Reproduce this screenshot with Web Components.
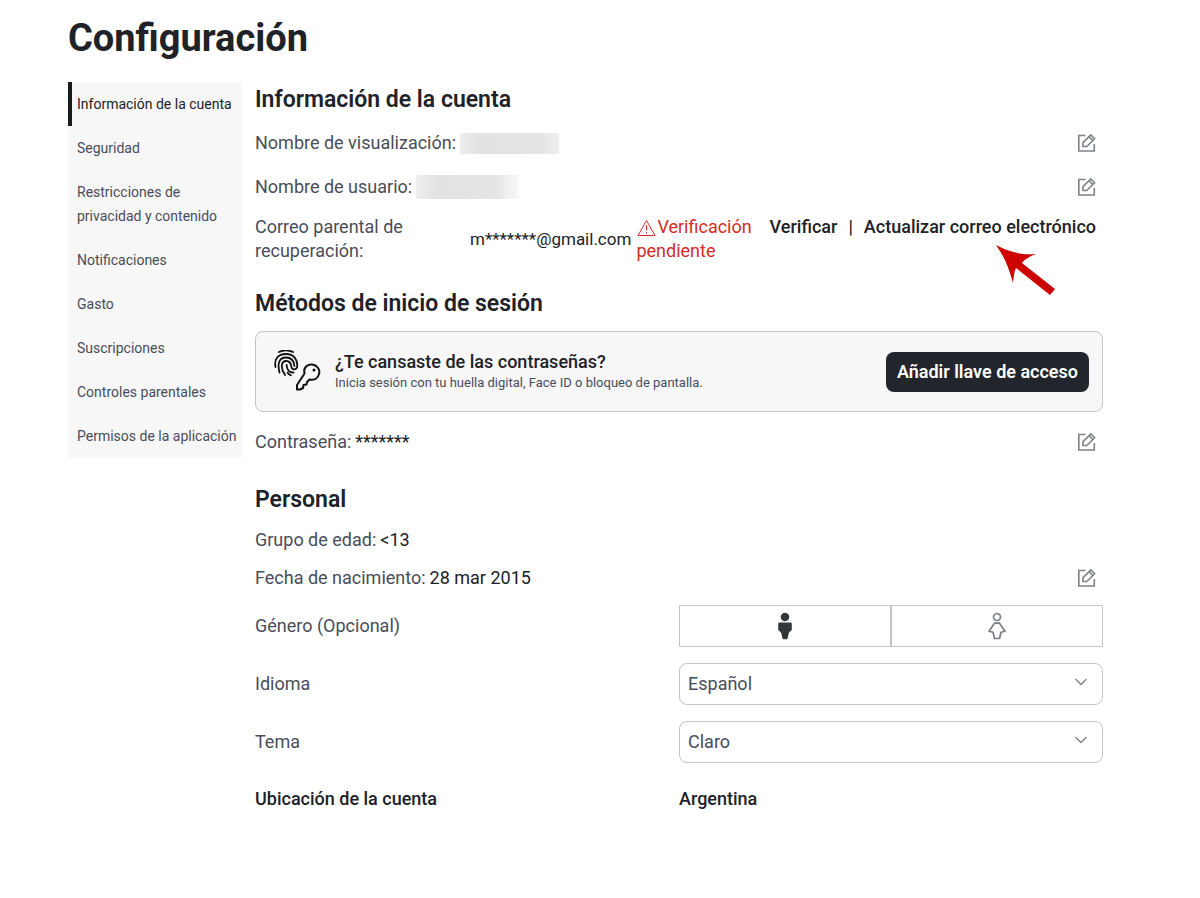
<!DOCTYPE html>
<html lang="es">
<head>
<meta charset="utf-8">
<meta name="viewport" content="width=device-width, initial-scale=1">
<title>Configuración</title>
<style>
  body {
    margin: 0;
    background: #fff;
    color: #202227;
    font: 400 18px/24px Roboto, "Noto Sans", sans-serif;
    --muted: #494d5a;
    --line: #c3c4c7;
    --panel: #f7f7f8;
  }
</style>
</head>
<body>
<settings-page heading="Configuración">
  <settings-nav slot="nav">
    <nav-item active>Información de la cuenta</nav-item>
    <nav-item>Seguridad</nav-item>
    <nav-item>Restricciones de privacidad y contenido</nav-item>
    <nav-item>Notificaciones</nav-item>
    <nav-item>Gasto</nav-item>
    <nav-item>Suscripciones</nav-item>
    <nav-item>Controles parentales</nav-item>
    <nav-item>Permisos de la aplicación</nav-item>
  </settings-nav>

  <settings-section heading="Información de la cuenta">
    <info-row label="Nombre de visualización:" editable><hidden-value></hidden-value></info-row>
    <info-row label="Nombre de usuario:" editable><hidden-value size="large"></hidden-value></info-row>
    <email-row label="Correo parental de recuperación:" email="m*******@gmail.com" status="Verificación pendiente"></email-row>
  </settings-section>

  <settings-section heading="Métodos de inicio de sesión">
    <passkey-card heading="¿Te cansaste de las contraseñas?" action="Añadir llave de acceso">Inicia sesión con tu huella digital, Face ID o bloqueo de pantalla.</passkey-card>
    <info-row label="Contraseña:" editable>*******</info-row>
  </settings-section>

  <settings-section heading="Personal">
    <info-row label="Grupo de edad:" compact>&lt;13</info-row>
    <info-row label="Fecha de nacimiento:" compact editable>28 mar 2015</info-row>
    <gender-field label="Género (Opcional)"></gender-field>
    <select-field label="Idioma" options="Español,English,Português"></select-field>
    <select-field label="Tema" options="Claro,Oscuro"></select-field>
    <text-field label="Ubicación de la cuenta">Argentina</text-field>
  </settings-section>
</settings-page>

<script>
class SettingsPage extends HTMLElement {
  constructor() {
    super();
    this.attachShadow({ mode: 'open' });
  }

  connectedCallback() {
    this.shadowRoot.innerHTML = `
      <style>
        :host {
          display: block;
          padding: 16px 97px 40px 68px;
        }

        h1 {
          margin: 0 0 22px;
          font-size: 38px;
          line-height: 44px;
          font-weight: 700;
        }

        .columns {
          display: flex;
          align-items: flex-start;
          gap: 13px;
        }

        main {
          flex: 1;
          min-width: 0;
        }
      </style>
      <h1>${this.getAttribute('heading')}</h1>
      <div class="columns">
        <slot name="nav"></slot>
        <main><slot></slot></main>
      </div>
    `;
  }
}

class SettingsNav extends HTMLElement {
  constructor() {
    super();
    this.attachShadow({ mode: 'open' });
  }

  connectedCallback() {
    this.shadowRoot.innerHTML = `
      <style>
        :host {
          display: block;
          flex: none;
          width: 174px;
          background: var(--panel);
        }
      </style>
      <nav aria-label="Configuración"><slot></slot></nav>
    `;
  }
}

class NavItem extends HTMLElement {
  constructor() {
    super();
    this.attachShadow({ mode: 'open' });
  }

  connectedCallback() {
    this.shadowRoot.innerHTML = `
      <style>
        :host {
          display: block;
        }

        a {
          display: block;
          padding: 10px 5px;
          border-left: 4px solid transparent;
          color: var(--muted);
          font-size: 14px;
          text-decoration: none;
        }

        :host([active]) a {
          border-color: #191b1f;
          color: #202227;
        }
      </style>
      <a href="#"><slot></slot></a>
    `;
  }
}

class SettingsSection extends HTMLElement {
  constructor() {
    super();
    this.attachShadow({ mode: 'open' });
  }

  connectedCallback() {
    this.shadowRoot.innerHTML = `
      <style>
        :host {
          display: block;
          margin-bottom: 18px;
        }

        h2 {
          margin: 0 0 3px;
          font-size: 23px;
          line-height: 36px;
          font-weight: 600;
        }
      </style>
      <section>
        <h2>${this.getAttribute('heading')}</h2>
        <slot></slot>
      </section>
    `;
  }
}

class EditButton extends HTMLElement {
  constructor() {
    super();
    this.attachShadow({ mode: 'open' });
  }

  connectedCallback() {
    this.shadowRoot.innerHTML = `
      <style>
        :host {
          display: block;
          margin-left: auto;
        }

        button {
          display: block;
          padding: 6px;
          border: 0;
          background: none;
          color: #7f8184;
        }

        svg {
          display: block;
        }
      </style>
      <button type="button" aria-label="${this.getAttribute('label')}">
        <svg width="20" height="20" viewBox="0 0 20 20" fill="none" stroke="currentColor" stroke-width="1.600">
          <path d="M8.500 2.500H1.800v15.500h15.500V11"/>
          <path d="M6 13.500V9.700L13.800 1.900l3.800 3.800L9.800 13.500zM12 3.700l3.800 3.800"/>
        </svg>
      </button>
    `;
  }
}

class HiddenValue extends HTMLElement {
  constructor() {
    super();
    this.attachShadow({ mode: 'open' });
  }

  connectedCallback() {
    this.shadowRoot.innerHTML = `
      <style>
        :host {
          display: block;
          width: 99px;
          height: 21px;
          background: linear-gradient(90deg, #ededee, #e2e2e3 20%, #e4e4e5 80%, #efeff0);
        }

        :host([size="large"]) {
          width: 103px;
          height: 24px;
          background: linear-gradient(90deg, #eeeeef, #e2e2e3 20%, #e4e4e5 75%, #f8f8f8);
        }
      </style>
    `;
  }
}

class InfoRow extends HTMLElement {
  constructor() {
    super();
    this.attachShadow({ mode: 'open' });
  }

  connectedCallback() {
    const label = this.getAttribute('label');

    this.shadowRoot.innerHTML = `
      <style>
        :host {
          display: flex;
          align-items: center;
          gap: 4px;
          height: 44px;
        }

        :host([compact]) {
          height: 38px;
        }

        .label {
          color: var(--muted);
        }
      </style>
      <span class="label">${label}</span>
      <slot></slot>
      ${this.hasAttribute('editable') ? `<edit-button label="Editar ${label}"></edit-button>` : ''}
    `;
  }
}

class EmailRow extends HTMLElement {
  constructor() {
    super();
    this.attachShadow({ mode: 'open' });
  }

  connectedCallback() {
    this.shadowRoot.innerHTML = `
      <style>
        :host {
          display: flex;
          padding: 6px 7px 5px 0;
        }

        .label {
          flex: none;
          box-sizing: border-box;
          width: 215px;
          padding-right: 40px;
          color: var(--muted);
        }

        .email {
          align-self: center;
          font-size: 17px;
        }

        .status {
          flex: 0 0 124px;
          margin-left: 5px;
          color: #d42c26;
        }

        .status svg {
          vertical-align: -4px;
        }

        .actions {
          position: relative;
          display: flex;
          gap: 11px;
          margin-left: auto;
          font-weight: 500;
          white-space: nowrap;
        }

        a {
          color: inherit;
          text-decoration: none;
        }

        .arrow {
          position: absolute;
          top: 29px;
          right: 40px;
        }
      </style>
      <span class="label">${this.getAttribute('label')}</span>
      <span class="email">${this.getAttribute('email')}</span>
      <span class="status">
        <svg width="21" height="18" viewBox="0 0 21 18" fill="none" stroke="currentColor" aria-hidden="true">
          <path d="M10.500 1.500 19 16.500H2z" stroke-linejoin="round"/>
          <path d="M10.500 6v5.500M10.500 13v1.500"/>
        </svg>${this.getAttribute('status')}
      </span>
      <span class="actions">
        <a href="#">Verificar</a>
        <span>|</span>
        <a href="#">Actualizar correo electrónico</a>
        <svg class="arrow" width="61" height="52" viewBox="0 0 61 52" aria-hidden="true">
          <path fill="#cd0303" d="M1 1C14 8 26 11 41 10 34 13 30 15 27 19L60 45 55 51 21 24C19 28 19 32 18 39 14 24 9 12 1 1z"/>
        </svg>
      </span>
    `;
  }
}

class PasskeyCard extends HTMLElement {
  constructor() {
    super();
    this.attachShadow({ mode: 'open' });
  }

  connectedCallback() {
    this.shadowRoot.innerHTML = `
      <style>
        :host {
          display: flex;
          align-items: center;
          gap: 13px;
          margin: 9px 0 8px;
          padding: 18px 13px 17px 18px;
          border: 1px solid var(--line);
          border-radius: 8px;
          background: var(--panel);
        }

        svg {
          flex: none;
        }

        .text {
          flex: 1;
        }

        h3 {
          margin: 0;
          font: inherit;
          font-weight: 500;
          line-height: 22px;
        }

        p {
          margin: 0;
          color: var(--muted);
          font-size: 13px;
          line-height: 20px;
        }

        button {
          padding: 8px 11px;
          border: 0;
          border-radius: 8px;
          background: #23252c;
          color: #fff;
          font: inherit;
          font-weight: 600;
        }
      </style>
      <svg width="48" height="44" viewBox="0 1 48 44" fill="none" stroke="#111" stroke-width="1.800" stroke-linecap="round" aria-hidden="true">
        <path d="M5 3C9 1 15 1 19 3"/>
        <path d="M1.500 18C0 10 4 5 12 5s11.500 5.500 11.300 12c-.3 4.200-5.500 4.500-6 .5-.4-3.500-2-5.500-5-5.500-6 0-5.500 8-1.300 14"/>
        <path d="M5.500 23.500C3 13 6 8.500 12 8.500s8 4 8.400 8.500"/>
        <path d="M12.600 15.800c0 5 3 8 6.900 7.700M13.500 23.500c1 1.700 2 2.300 3.500 2.800"/>
        <path d="M30.500 24.500C29 19 33 15 38 15.500c5 .5 8.500 5 7 9.500-1 4.500-5 6.500-9.500 5.500L33 33l-.5 2.500-3 .5-.5 3-3 1.500h-3V36z" stroke-width="2" stroke-linejoin="round"/>
        <circle cx="40" cy="21" r="1.500" fill="#111" stroke="none"/>
      </svg>
      <div class="text">
        <h3>${this.getAttribute('heading')}</h3>
        <p><slot></slot></p>
      </div>
      <button type="button">${this.getAttribute('action')}</button>
    `;
  }
}

// Shared two-column layout of the form rows in the Personal section
const fieldStyles = `
  :host {
    display: grid;
    grid-template-columns: 1fr 1fr;
    align-items: center;
    margin-top: 16px;
    color: var(--muted);
  }
`;

class GenderField extends HTMLElement {
  constructor() {
    super();
    this.attachShadow({ mode: 'open' });
  }

  connectedCallback() {
    this.shadowRoot.innerHTML = `
      <style>
        ${fieldStyles}
        :host {
          margin-top: 8px;
        }

        .options {
          display: flex;
          border: 1px solid var(--line);
        }

        label {
          flex: 1;
          display: flex;
          align-items: center;
          justify-content: center;
          height: 40px;
          color: #7b7d80;
        }

        label + label {
          border-left: 2px solid var(--line);
        }

        input {
          appearance: none;
          width: 0;
          height: 0;
          margin: 0;
        }
      </style>
      <span id="legend">${this.getAttribute('label')}</span>
      <div class="options" role="radiogroup" aria-labelledby="legend">
        <label>
          <input type="radio" name="gender" value="male" aria-label="Masculino" checked>
          <svg width="20" height="28" viewBox="0 0 20 28" fill="#343638">
            <circle cx="10" cy="5" r="4.300"/>
            <path d="M4.500 10.500h11q1.300 0 1.300 1.300V18l-2.800 2.500-1.500 6q-.2.800-1 .8h-3q-.8 0-1-.8L6 20.500 3.200 18v-6.200q0-1.300 1.300-1.300z"/>
          </svg>
        </label>
        <label>
          <input type="radio" name="gender" value="female" aria-label="Femenino">
          <svg width="20" height="28" viewBox="0 0 20 28" fill="none" stroke="currentColor" stroke-width="1.700">
            <circle cx="10" cy="5" r="3.500"/>
            <path d="M7.500 11.200h5l5.500 8-4 1-1.500 6.300h-5L6 20.200l-4-1z" stroke-linejoin="round"/>
          </svg>
        </label>
      </div>
    `;
  }
}

class SelectField extends HTMLElement {
  constructor() {
    super();
    this.attachShadow({ mode: 'open' });
  }

  connectedCallback() {
    const options = this.getAttribute('options').split(',');

    this.shadowRoot.innerHTML = `
      <style>
        ${fieldStyles}
        .control {
          display: grid;
          align-items: center;
        }

        select,
        svg {
          grid-area: 1 / 1;
        }

        select {
          appearance: none;
          width: 100%;
          height: 42px;
          padding: 0 8px;
          border: 1px solid var(--line);
          border-radius: 8px;
          background: #fff;
          color: inherit;
          font: inherit;
        }

        svg {
          justify-self: end;
          margin: 0 15px 4px 0;
          pointer-events: none;
        }
      </style>
      <label for="select">${this.getAttribute('label')}</label>
      <div class="control">
        <select id="select">
          ${options.map(option => `<option>${option}</option>`).join('')}
        </select>
        <svg width="14" height="8" viewBox="0 0 14 8" fill="none" stroke="#7f8184" stroke-width="1.300">
          <path d="M1.500 1 7 6.500 12.500 1"/>
        </svg>
      </div>
    `;
  }
}

class TextField extends HTMLElement {
  constructor() {
    super();
    this.attachShadow({ mode: 'open' });
  }

  connectedCallback() {
    this.shadowRoot.innerHTML = `
      <style>
        ${fieldStyles}
        :host {
          min-height: 40px;
          color: inherit;
          font-weight: 500;
        }
      </style>
      <span>${this.getAttribute('label')}</span>
      <span><slot></slot></span>
    `;
  }
}

customElements.define('settings-page', SettingsPage);
customElements.define('settings-nav', SettingsNav);
customElements.define('nav-item', NavItem);
customElements.define('settings-section', SettingsSection);
customElements.define('edit-button', EditButton);
customElements.define('hidden-value', HiddenValue);
customElements.define('info-row', InfoRow);
customElements.define('email-row', EmailRow);
customElements.define('passkey-card', PasskeyCard);
customElements.define('gender-field', GenderField);
customElements.define('select-field', SelectField);
customElements.define('text-field', TextField);
</script>
</body>
</html>
